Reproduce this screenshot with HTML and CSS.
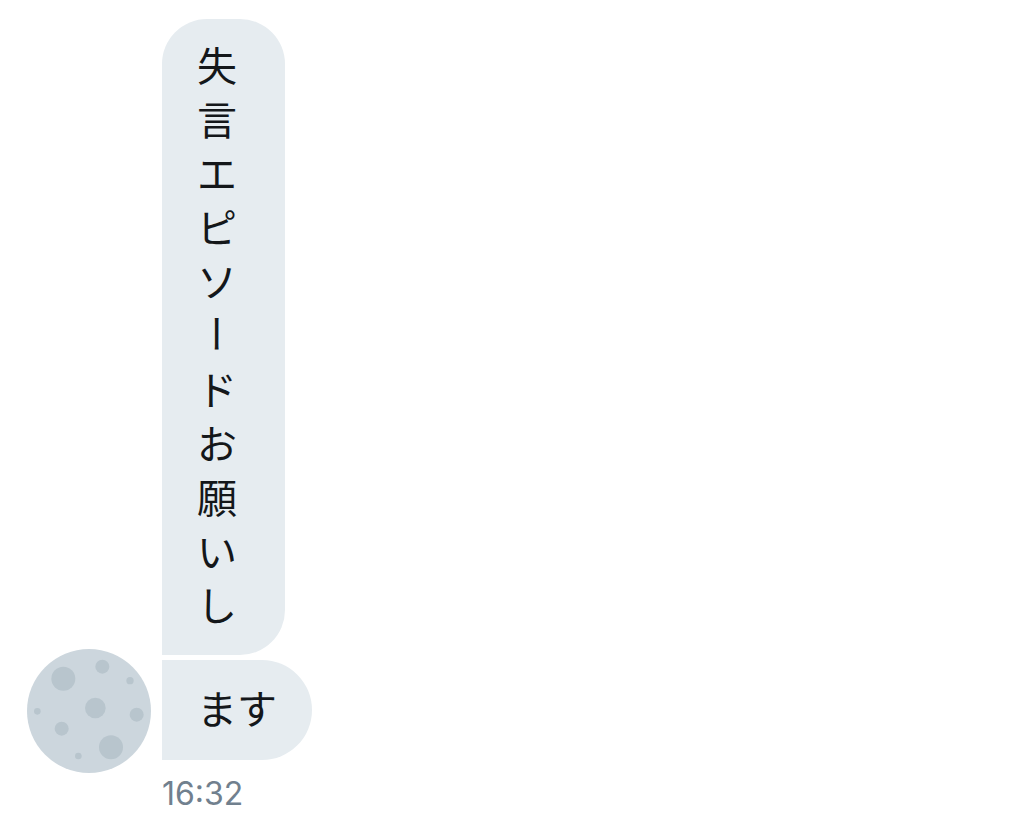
FILE: index.html
```html
<!DOCTYPE html>
<html lang="ja">
<head>
  <meta charset="UTF-8">
  <meta name="viewport" content="width=device-width, initial-scale=1">
  <title>メッセージ</title>
  <link rel="stylesheet" href="styles.css">
</head>
<body>
  <main class="thread">
    <div class="message-row">
      <svg class="avatar" viewBox="0 0 372 372" role="img" aria-label="アイコン">
        <circle cx="186" cy="186" r="186" fill="#ccd6dd"/>
        <g fill="#b8c5cd">
          <circle cx="109" cy="89" r="36"/>
          <circle cx="226" cy="53" r="21"/>
          <circle cx="309" cy="95" r="11"/>
          <circle cx="205" cy="177" r="31"/>
          <circle cx="31" cy="187" r="10"/>
          <circle cx="329" cy="197" r="21"/>
          <circle cx="104" cy="239" r="21"/>
          <circle cx="252" cy="295" r="36"/>
          <circle cx="154" cy="321" r="10"/>
        </g>
      </svg>

      <div class="bubbles">
        <p class="bubble bubble-tall">失<br>言<br>エ<br>ピ<br>ソ<br><span class="upright">ー</span><br>ド<br>お<br>願<br>い<br>し</p>
        <p class="bubble">ます</p>
      </div>
    </div>
    <time class="time" datetime="16:32">16:32</time>
  </main>
</body>
</html>
```

FILE: styles.css
```css
:root {
  --bubble-bg: #e6ecf0;
  --text: #14171a;
  --muted: #71808e;
  --avatar: 124px;
  --gap: 11px;
}

* {
  box-sizing: border-box;
}

body {
  margin: 0;
  background: #fff;
  color: var(--text);
  font-family: "Noto Sans CJK JP", sans-serif;
}

.thread {
  padding: 19px 27px;
}

.message-row {
  display: flex;
  align-items: flex-end;
  gap: var(--gap);
}

.avatar {
  flex: none;
  width: var(--avatar);
  height: var(--avatar);
  margin-bottom: -13px;
}

.bubbles {
  display: flex;
  flex-direction: column;
  align-items: flex-start;
  gap: 5px;
}

.bubble {
  margin: 0;
  padding: 20px 35px 26px;
  background: var(--bubble-bg);
  border-radius: 0 50px 50px 0;
  font-size: 40px;
  font-weight: 400;
  line-height: 54px;
}

.bubble-tall {
  padding: 18px 48px 24px 35px;
  border-radius: 45px 45px 45px 0;
}

/* long vowel mark turned for top-to-bottom reading */
.upright {
  display: inline-block;
  height: 54px;
  line-height: 40px;
  text-align: center;
  writing-mode: vertical-rl;
  vertical-align: top;
}

.time {
  display: block;
  margin-top: 16px;
  margin-left: calc(var(--avatar) + var(--gap));
  color: var(--muted);
  font-family: Inter, sans-serif;
  font-size: 32px;
  line-height: 36px;
}
```
